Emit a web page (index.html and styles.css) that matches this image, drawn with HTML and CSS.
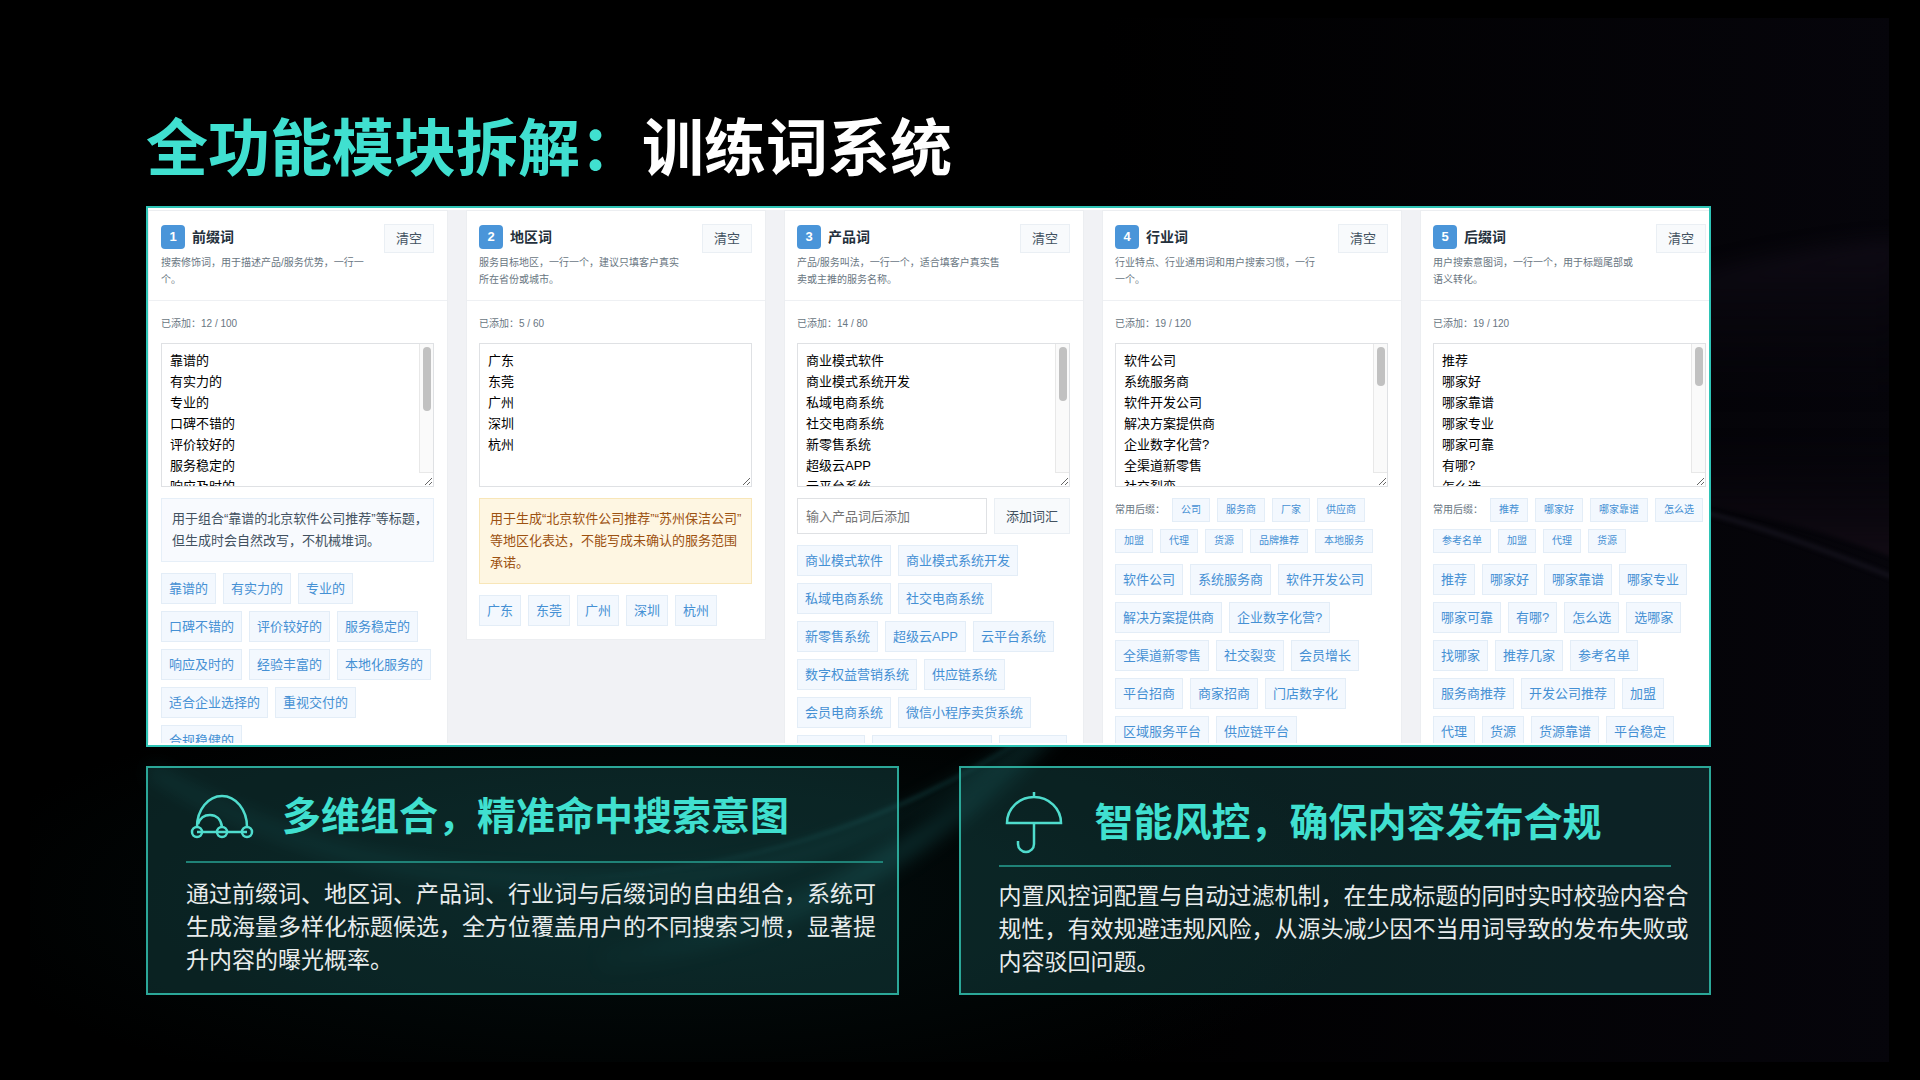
FILE: index.html
```html
<!DOCTYPE html>
<html lang="zh-CN">
<head>
<meta charset="utf-8">
<meta name="viewport" content="width=device-width, initial-scale=1">
<title>全功能模块拆解：训练词系统</title>
<link rel="stylesheet" href="styles.css">
</head>
<body>
<svg class="backdrop" viewBox="0 0 1920 1080" preserveAspectRatio="none" aria-hidden="true">
  <defs>
    <radialGradient id="teal"><stop offset="0" stop-color="#0c3a3c" stop-opacity=".6"/><stop offset="1" stop-color="#0c3a3c" stop-opacity="0"/></radialGradient>
    <linearGradient id="violet" x1="0" x2="1"><stop offset="0" stop-color="#06050b" stop-opacity="0"/><stop offset="1" stop-color="#06050b"/></linearGradient>
    <linearGradient id="band" x1="0" x2="0" y1="0" y2="1"><stop offset="0" stop-color="#0f0b15"/><stop offset="1" stop-color="#06050b" stop-opacity="0"/></linearGradient>
    <linearGradient id="rise" x1="0" x2="0" y1="1" y2="0"><stop offset="0" stop-color="#130c15"/><stop offset="1" stop-color="#06050b" stop-opacity="0"/></linearGradient>
    <linearGradient id="fade" gradientUnits="userSpaceOnUse" x1="560" y1="0" x2="1060" y2="0"><stop offset="0" stop-color="#14494a" stop-opacity="0"/><stop offset=".7" stop-color="#14494a"/><stop offset="1" stop-color="#14494a" stop-opacity=".5"/></linearGradient>
    <filter id="soft" x="-20%" y="-20%" width="140%" height="140%" color-interpolation-filters="sRGB"><feGaussianBlur stdDeviation="9"/></filter>
    <filter id="fine" x="-20%" y="-20%" width="140%" height="140%" color-interpolation-filters="sRGB"><feGaussianBlur stdDeviation="2"/></filter>
    <clipPath id="frame"><rect x="30" y="18" width="1859" height="1044"/></clipPath>
  </defs>
  <g clip-path="url(#frame)">
    <rect x="1100" width="800" height="1080" fill="url(#violet)"/>
    <ellipse cx="660" cy="900" rx="720" ry="220" fill="url(#teal)" opacity=".4"/>
    <path d="M1600 300C1700 270 1800 245 1900 240V400H1600Z" fill="url(#band)" filter="url(#soft)"/>
    <path d="M1600 430H1900V560C1820 530 1760 510 1600 490Z" fill="url(#rise)" filter="url(#fine)"/>
    <path d="M1600 490C1720 510 1800 540 1900 580" stroke="#15131d" stroke-width="4" fill="none" filter="url(#fine)"/>
    <g fill="none">
      <path d="M150 770C300 860 440 880 600 880S860 850 1040 735" stroke="#14494a" stroke-width="12" opacity=".35" filter="url(#soft)"/>
      <path d="M560 880C740 870 880 830 1030 735" stroke="url(#fade)" stroke-width="3" opacity=".6" filter="url(#fine)"/>
      <path d="M600 960C800 930 930 850 1060 720" stroke="url(#fade)" stroke-width="22" opacity=".5" filter="url(#soft)"/>
    </g>
  </g>
</svg>
<main class="slide">
  <h1 class="slide-title">全功能模块拆解：<span>训练词系统</span></h1>

  <section class="shot">
    <div class="columns">
      <article class="word-card">
        <header class="card-head">
          <div class="card-intro">
            <h2><span class="badge">1</span>前缀词</h2>
            <p>搜索修饰词，用于描述产品/服务优势，一行一个。</p>
          </div>
          <button class="btn" type="button">清空</button>
        </header>
        <div class="card-body">
          <label class="count" for="w1">已添加：12 / 100</label>
          <div class="field">
            <textarea id="w1" class="words">靠谱的
有实力的
专业的
口碑不错的
评价较好的
服务稳定的
响应及时的
经验丰富的
本地化服务的
适合企业选择的
重视交付的
合规稳健的</textarea>
            <span class="scroll scroll-long"></span>
          </div>
          <p class="note">用于组合“靠谱的北京软件公司推荐”等标题，但生成时会自然改写，不机械堆词。</p>
          <div class="chips">
            <button>靠谱的</button><button>有实力的</button><button>专业的</button><button>口碑不错的</button><button>评价较好的</button><button>服务稳定的</button><button>响应及时的</button><button>经验丰富的</button><button>本地化服务的</button><button>适合企业选择的</button><button>重视交付的</button><button>合规稳健的</button>
          </div>
        </div>
      </article>

      <article class="word-card">
        <header class="card-head">
          <div class="card-intro">
            <h2><span class="badge">2</span>地区词</h2>
            <p>服务目标地区，一行一个，建议只填客户真实所在省份或城市。</p>
          </div>
          <button class="btn" type="button">清空</button>
        </header>
        <div class="card-body">
          <label class="count" for="w2">已添加：5 / 60</label>
          <div class="field">
            <textarea id="w2" class="words">广东
东莞
广州
深圳
杭州</textarea>
          </div>
          <p class="note note-warn">用于生成“北京软件公司推荐”“苏州保洁公司”等地区化表达，不能写成未确认的服务范围承诺。</p>
          <div class="chips">
            <button>广东</button><button>东莞</button><button>广州</button><button>深圳</button><button>杭州</button>
          </div>
        </div>
      </article>

      <article class="word-card">
        <header class="card-head">
          <div class="card-intro">
            <h2><span class="badge">3</span>产品词</h2>
            <p>产品/服务叫法，一行一个，适合填客户真实售卖或主推的服务名称。</p>
          </div>
          <button class="btn" type="button">清空</button>
        </header>
        <div class="card-body">
          <label class="count" for="w3">已添加：14 / 80</label>
          <div class="field">
            <textarea id="w3" class="words">商业模式软件
商业模式系统开发
私域电商系统
社交电商系统
新零售系统
超级云APP
云平台系统
数字权益营销系统
供应链系统
会员电商系统
微信小程序卖货系统
直播系统
分销商城系统开发
积分商城</textarea>
            <span class="scroll scroll-medium"></span>
          </div>
          <div class="add-row">
            <input type="text" placeholder="输入产品词后添加" aria-label="输入产品词后添加">
            <button class="btn" type="button">添加词汇</button>
          </div>
          <div class="chips">
            <button>商业模式软件</button><button>商业模式系统开发</button><button>私域电商系统</button><button>社交电商系统</button><button>新零售系统</button><button>超级云APP</button><button>云平台系统</button><button>数字权益营销系统</button><button>供应链系统</button><button>会员电商系统</button><button>微信小程序卖货系统</button><button>直播系统</button><button>分销商城系统开发</button><button>积分商城</button>
          </div>
        </div>
      </article>

      <article class="word-card">
        <header class="card-head">
          <div class="card-intro">
            <h2><span class="badge">4</span>行业词</h2>
            <p>行业特点、行业通用词和用户搜索习惯，一行一个。</p>
          </div>
          <button class="btn" type="button">清空</button>
        </header>
        <div class="card-body">
          <label class="count" for="w4">已添加：19 / 120</label>
          <div class="field">
            <textarea id="w4" class="words">软件公司
系统服务商
软件开发公司
解决方案提供商
企业数字化营?
全渠道新零售
社交裂变
会员增长
平台招商
商家招商
门店数字化
区域服务平台
供应链平台
厂家
加盟
代理
货源
品牌推荐
本地服务</textarea>
            <span class="scroll"></span>
          </div>
          <div class="chips chips-small">
            <span>常用后缀：</span><button>公司</button><button>服务商</button><button>厂家</button><button>供应商</button><button>加盟</button><button>代理</button><button>货源</button><button>品牌推荐</button><button>本地服务</button>
          </div>
          <div class="chips">
            <button>软件公司</button><button>系统服务商</button><button>软件开发公司</button><button>解决方案提供商</button><button>企业数字化营?</button><button>全渠道新零售</button><button>社交裂变</button><button>会员增长</button><button>平台招商</button><button>商家招商</button><button>门店数字化</button><button>区域服务平台</button><button>供应链平台</button>
          </div>
        </div>
      </article>

      <article class="word-card">
        <header class="card-head">
          <div class="card-intro">
            <h2><span class="badge">5</span>后缀词</h2>
            <p>用户搜索意图词，一行一个，用于标题尾部或语义转化。</p>
          </div>
          <button class="btn" type="button">清空</button>
        </header>
        <div class="card-body">
          <label class="count" for="w5">已添加：19 / 120</label>
          <div class="field">
            <textarea id="w5" class="words">推荐
哪家好
哪家靠谱
哪家专业
哪家可靠
有哪?
怎么选
选哪家
找哪家
推荐几家
参考名单
服务商推荐
开发公司推荐
加盟
代理
货源
货源靠谱
平台稳定
本地服务</textarea>
            <span class="scroll"></span>
          </div>
          <div class="chips chips-small">
            <span>常用后缀：</span><button>推荐</button><button>哪家好</button><button>哪家靠谱</button><button>怎么选</button><button>参考名单</button><button>加盟</button><button>代理</button><button>货源</button>
          </div>
          <div class="chips">
            <button>推荐</button><button>哪家好</button><button>哪家靠谱</button><button>哪家专业</button><button>哪家可靠</button><button>有哪?</button><button>怎么选</button><button>选哪家</button><button>找哪家</button><button>推荐几家</button><button>参考名单</button><button>服务商推荐</button><button>开发公司推荐</button><button>加盟</button><button>代理</button><button>货源</button><button>货源靠谱</button><button>平台稳定</button>
          </div>
        </div>
      </article>
    </div>
  </section>

  <section class="features">
    <article class="feature">
      <div class="feature-head">
        <svg width="64" height="46" viewBox="0 0 64 46" aria-hidden="true">
          <circle cx="7" cy="38" r="5"/><circle cx="32" cy="38" r="5"/><circle cx="57" cy="38" r="5"/>
          <path d="M7 38H57M7 33A25 31 0 0 1 57 33M8 30C10 24 14 21 20 21S31 25 32 33"/>
        </svg>
        <h2>多维组合，精准命中搜索意图</h2>
      </div>
      <p>通过前缀词、地区词、产品词、行业词与后缀词的自由组合，系统可生成海量多样化标题候选，全方位覆盖用户的不同搜索习惯，显著提升内容的曝光概率。</p>
    </article>
    <article class="feature feature-risk">
      <div class="feature-head">
        <svg width="64" height="64" viewBox="0 0 64 64" aria-hidden="true">
          <path d="M31 1v5M4 32A27 26 0 0 1 58 32ZM31 32V53A8 8 0 0 1 15 53V50"/>
        </svg>
        <h2>智能风控，确保内容发布合规</h2>
      </div>
      <p>内置风控词配置与自动过滤机制，在生成标题的同时实时校验内容合规性，有效规避违规风险，从源头减少因不当用词导致的发布失败或内容驳回问题。</p>
    </article>
  </section>
</main>
</body>
</html>
```
FILE: styles.css
```css
* {
  box-sizing: border-box;
}

body {
  margin: 0;
  min-height: 100vh;
  background: #000;
  font-family: "Liberation Sans", "Noto Sans CJK SC", sans-serif;
  text-spacing-trim: space-all;
}

h1, h2, p {
  margin: 0;
}

button, input, textarea {
  font-family: inherit;
}

.backdrop {
  position: absolute;
  inset: 0;
  width: 100%;
  height: 100%;
  z-index: -1;
}

.slide {
  padding: 110px 209px 80px 146px;
}

.slide-title {
  margin-bottom: 16px;
  font-size: 62px;
  line-height: 80px;
  font-weight: 700;
  color: #40e0d0;
}

.slide-title span {
  color: #fff;
}

/* Word library panel, cropped at its lower and right edges */
.shot {
  height: 541px;
  padding: 2px 0;
  border: 2px solid #2ec4b6;
  background: #fff;
  overflow: hidden;
}

.columns {
  display: grid;
  grid-template-columns: repeat(5, minmax(300px, 1fr));
  gap: 18px;
  align-items: start;
  height: 533px;
  background: #f1f2f5;
  overflow: hidden;
}

.word-card {
  border: 1px solid #eceef1;
  background: #fff;
}

.card-head {
  display: flex;
  justify-content: space-between;
  align-items: flex-start;
  padding: 13px 13px 12px 12px;
  border-bottom: 1px solid #eef0f3;
}

.card-intro {
  width: 206px;
}

.card-intro h2 {
  display: flex;
  align-items: center;
  gap: 7px;
  margin: 1px 0 5px;
  font-size: 14px;
  line-height: 24px;
  font-weight: 700;
  color: #24303c;
}

.badge {
  width: 24px;
  height: 24px;
  border-radius: 4px;
  background: #4a95d9;
  color: #fff;
  font-size: 13px;
  text-align: center;
}

.card-intro p {
  font-size: 10px;
  line-height: 17px;
  color: #697682;
}

.btn {
  flex: none;
  padding: 0 11px;
  border: 1px solid #eaeff4;
  background: #f8fafc;
  color: #425160;
  font-size: 13px;
  line-height: 27px;
}

.card-body {
  display: flex;
  flex-direction: column;
  gap: 11px;
  padding: 14px 13px 13px 12px;
}

.count {
  font-size: 10px;
  line-height: 17px;
  color: #697682;
}

.field {
  position: relative;
}

.words {
  display: block;
  width: 100%;
  height: 144px;
  padding: 6px 8px;
  border: 1px solid #dfe1e4;
  border-radius: 0;
  background: #fff;
  color: #000;
  font-size: 13px;
  line-height: 21px;
  resize: vertical;
}

/* Always-visible scroll track over the right side of the text box */
.scroll {
  position: absolute;
  top: 1px;
  right: 1px;
  bottom: 14px;
  width: 14px;
  padding: 3px 2px 0 3px;
  border: solid #e8e8e8;
  border-width: 0 0 1px 1px;
  background: #fafafa;
}

.scroll::before {
  content: "";
  display: block;
  height: 39px;
  border-radius: 4px;
  background: #c1c1c1;
}

.scroll-medium::before {
  height: 54px;
}

.scroll-long::before {
  height: 64px;
}

.note {
  padding: 9px 4px 9px 10px;
  border: 1px solid #e6eff8;
  background: #f8fafe;
  color: #425160;
  font-size: 13px;
  line-height: 22px;
}

.note-warn {
  border-color: #f8e6b8;
  background: #fef6e2;
  color: #9c5110;
}

.add-row {
  display: flex;
  gap: 7px;
}

.add-row input {
  flex: 1;
  min-width: 0;
  height: 36px;
  padding: 0 8px;
  border: 1px solid #dfe1e4;
  font-size: 13px;
}

.add-row input::placeholder {
  color: #757575;
}

.chips {
  display: flex;
  flex-wrap: wrap;
  gap: 7px;
}

.chips button {
  padding: 0 7px;
  border: 1px solid #e3edf7;
  background: #f3f8fe;
  color: #4590d4;
  font-size: 13px;
  line-height: 29px;
}

.chips-small span {
  font-size: 10px;
  line-height: 24px;
  color: #697682;
}

.chips-small button {
  padding: 0 8px;
  font-size: 10px;
  line-height: 22px;
}

/* Feature summaries */
.features {
  display: grid;
  grid-template-columns: 1fr 1fr;
  gap: 60px;
  margin-top: 19px;
}

.feature {
  padding: 17px 14px 14px 38px;
  border: 2px solid #2ba798;
  background: rgba(38, 120, 120, .27);
}

.feature-head {
  display: flex;
  align-items: center;
  gap: 28px;
  height: 78px;
  padding: 0 0 12px 4px;
  border-bottom: 2px solid #1f8277;
}

.feature-head svg {
  flex: none;
  fill: none;
  stroke: #4fdccd;
  stroke-width: 2.5;
}

.feature h2 {
  font-size: 39px;
  line-height: 52px;
  font-weight: 700;
  color: #40e0d0;
}

.feature p {
  margin-top: 15px;
  font-size: 23px;
  line-height: 33px;
  color: #e8ecec;
}

.feature-risk .feature-head {
  height: 82px;
  padding-bottom: 4px;
  margin-right: 24px;
}

.feature-risk p {
  margin-top: 13px;
}
```
